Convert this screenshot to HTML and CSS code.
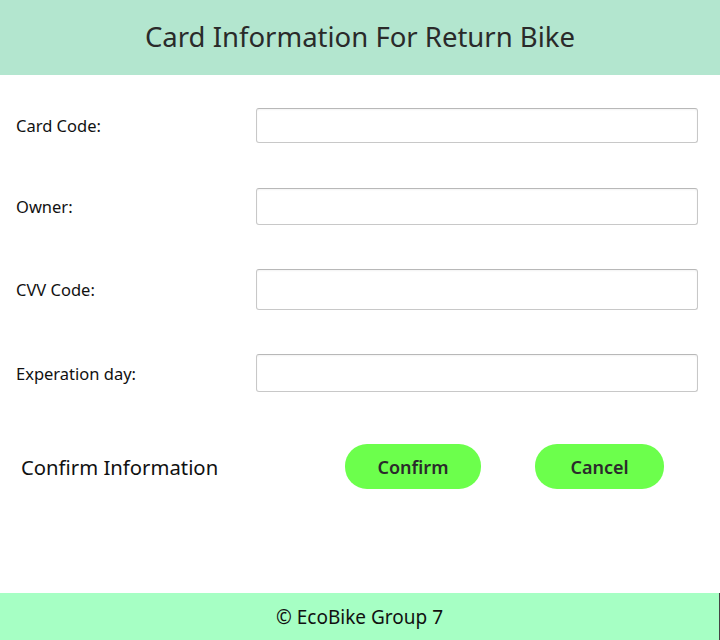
FILE: index.html
```
<!DOCTYPE html>
<html>
<head>
<meta charset="utf-8">
<link rel="stylesheet" href="styles.css">
</head>
<body>
<div class="app">
  <header class="header"><h1 class="title">Card Information For Return Bike</h1></header>
  <main class="main">
    <div class="form">
      <div class="row r1"><label class="label">Card Code:</label><input class="field f1" type="text"></div>
      <div class="row r2"><label class="label">Owner:</label><input class="field f2" type="text"></div>
      <div class="row r3"><label class="label">CVV Code:</label><input class="field f3" type="text"></div>
      <div class="row r4"><label class="label">Experation day:</label><input class="field f4" type="text"></div>
    </div>
    <div class="actions">
      <span class="confirm-text">Confirm Information</span>
      <button class="btn btn-confirm">Confirm</button>
      <button class="btn btn-cancel">Cancel</button>
    </div>
  </main>
  <footer class="footer">© EcoBike Group 7</footer>
</div>
</body>
</html>
```
FILE: styles.css
```
html, body {
  margin: 0;
  padding: 0;
  background: #ffffff;
}
body {
  font-family: "Noto Sans", "Open Sans", sans-serif;
  color: #222;
}
.app {
  width: 720px;
  height: 640px;
  display: flex;
  flex-direction: column;
}
.header {
  height: 75px;
  background: #b3e6cf;
  display: flex;
  align-items: center;
  justify-content: center;
}
.title {
  margin: 0 0 2px 0;
  font-weight: 400;
  font-size: 27.5px;
  color: #2a2a2a;
}
.main {
  flex: 1;
  display: flex;
  flex-direction: column;
}
.form {
  display: flex;
  flex-direction: column;
  padding: 0 22px 0 16px;
}
.row {
  display: grid;
  grid-template-columns: 240px 1fr;
  align-items: center;
}
.r1 { margin-top: 33px; }
.r2 { margin-top: 45px; }
.r3 { margin-top: 44px; }
.r4 { margin-top: 44px; }
.label {
  font-size: 16.5px;
  color: #111;
}
.field {
  box-sizing: border-box;
  width: 100%;
  margin: 0;
  border: 1px solid #c8c8c8;
  border-top-color: #b8b8b8;
  border-radius: 3px;
  background: #fff;
  box-shadow: inset 0 1px 2px rgba(0,0,0,0.05);
  outline: none;
}
.f1 { height: 35px; }
.f2 { height: 37px; }
.f3 { height: 41px; }
.f4 { height: 38px; }
.actions {
  display: flex;
  align-items: center;
  margin-top: 52px;
  padding-left: 21px;
}
.confirm-text {
  width: 324px;
  font-size: 20.3px;
  color: #111;
}
.btn {
  height: 45px;
  border: none;
  border-radius: 22px;
  background: #6cff4c;
  font-family: "Noto Sans", "Open Sans", sans-serif;
  font-weight: 600;
  font-size: 18px;
  color: #2b2b2b;
  padding: 0;
}
.btn-confirm { width: 136px; }
.btn-cancel { width: 129px; margin-left: 54px; }
.footer {
  height: 47px;
  background: #a6ffc4;
  display: flex;
  align-items: center;
  justify-content: center;
  font-size: 19px;
  color: #111;
  border-right: 1px solid #444;
  box-sizing: border-box;
}
```
